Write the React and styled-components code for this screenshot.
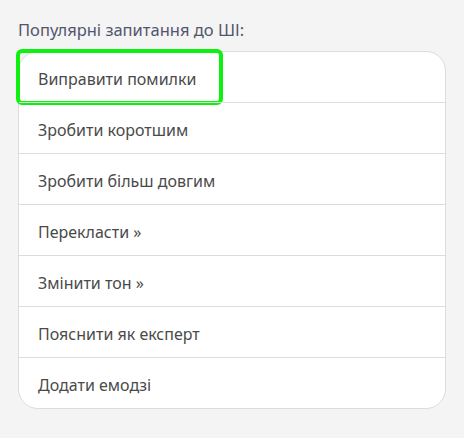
import React from 'react';
import styled, { createGlobalStyle } from 'styled-components';

const GlobalStyle = createGlobalStyle`
  html, body {
    margin: 0;
    background: #f4f4f4;
  }
  body {
    font-family: "Noto Sans", "Open Sans", sans-serif;
  }
`;

const Wrapper = styled.div`
  padding: 18px 18px 30px 18px;
  width: 428px;
`;

const Title = styled.div`
  font-size: 16.5px;
  line-height: 24px;
  color: #52566c;
  margin-bottom: 9px;
`;

const List = styled.div`
  background: #fff;
  border: 1px solid #dcdcdc;
  border-radius: 20px;
  display: flex;
  flex-direction: column;
`;

const Row = styled.div`
  display: flex;
  align-items: stretch;
  height: 50px;
  border-top: ${(p) => (p.$first ? 'none' : '1px solid #dcdcdc')};
`;

const Item = styled.button`
  display: flex;
  align-items: center;
  border: none;
  background: transparent;
  padding: 3px 24px 0 19px;
  font-family: inherit;
  font-size: 16px;
  color: #4a4a4a;
  cursor: pointer;
  border-radius: 3px;
  outline: ${(p) => (p.$focused ? '4px solid #0ef00e' : 'none')};
  outline-offset: -1px;
`;

const items = [
  'Виправити помилки',
  'Зробити коротшим',
  'Зробити більш довгим',
  'Перекласти »',
  'Змінити тон »',
  'Пояснити як експерт',
  'Додати емодзі',
];

const App = () => {
  return (
    <Wrapper>
      <GlobalStyle />
      <Title>Популярні запитання до ШІ:</Title>
      <List>
        {items.map((text, i) => (
          <Row key={text} $first={i === 0}>
            <Item $focused={i === 0}>{text}</Item>
          </Row>
        ))}
      </List>
    </Wrapper>
  );
};

export default App;
